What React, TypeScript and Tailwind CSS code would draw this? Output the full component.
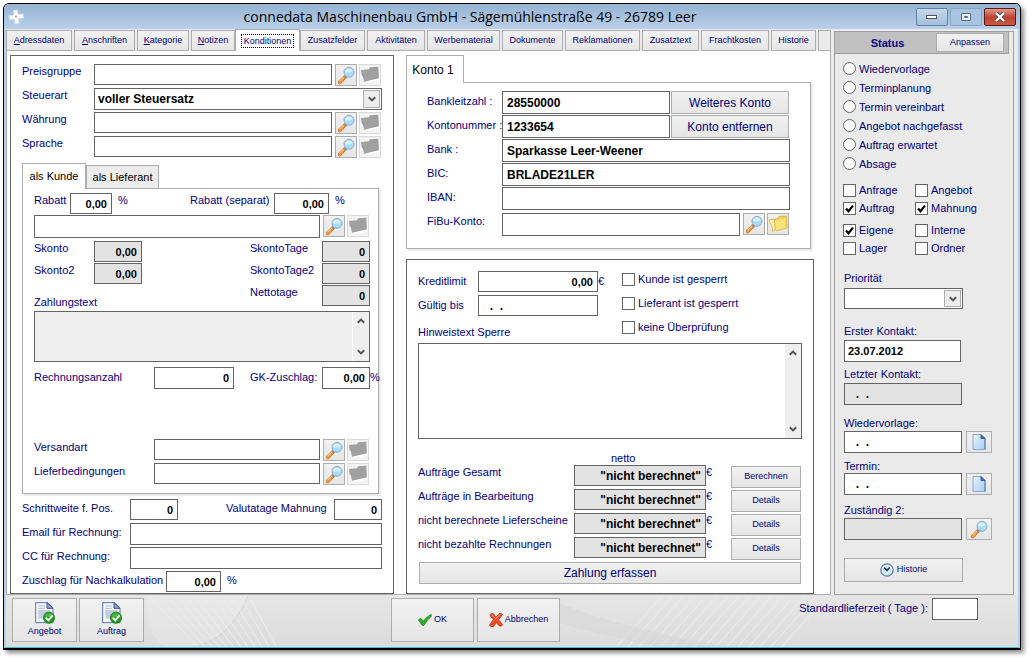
import React from "react";

function cx(...parts: (string | undefined | false)[]) {
  return parts.filter(Boolean).join(" ");
}

/* ---------- icons ---------- */

function SearchIcon() {
  return (
    <svg viewBox="0 0 60 60" className="size-5 shrink-0" aria-hidden="true">
      <path d="M11 52 L27 36" stroke="#c8743a" strokeWidth="11" strokeLinecap="round" />
      <path d="M11 52 L27 36" stroke="#fb9a35" strokeWidth="7" strokeLinecap="round" />
      <path d="M11 48 L25 34" stroke="#ffe0a8" strokeWidth="3" />
      <path d="M25 38 L31 32" stroke="#7d8793" strokeWidth="6" />
      <circle cx="39" cy="22" r="15" fill="#a4dcfa" stroke="#93aec6" strokeWidth="3" />
      <path d="M27 21 a12 12 0 0 1 23 -3 q-10 9 -23 3z" fill="#d9f3ff" />
    </svg>
  );
}

function FolderDisabledIcon() {
  return (
    <svg viewBox="0 0 60 60" className="size-5 shrink-0" aria-hidden="true">
      <path d="M6 14 L26 12 L36 6 L56 5 L59 43 L14 52 L13 35 L9 32z" fill="#ffffff" transform="translate(2 3)" />
      <path d="M3 15 L27 13 L30 7 L55 5 L57 40 L12 50 L9 36 L5 30z" fill="#a0a0a0" />
    </svg>
  );
}

function FolderIcon() {
  return (
    <svg viewBox="0 0 60 60" className="size-5 shrink-0" aria-hidden="true">
      <path d="M22 15 L31 13 L34 7 L55 6 L57 42 L26 50z" fill="#f5cf4e" stroke="#cda42c" strokeWidth="2" />
      <path d="M16 20 L24 18 L52 13 L54 41 L16 51z" fill="#fbe27a" />
      <path d="M4 17 L19 15 L22 48 L14 52 L11 34 L7 31z" fill="#fff0a8" stroke="#d0a02a" strokeWidth="2" />
    </svg>
  );
}

function PageIcon() {
  return (
    <svg viewBox="0 0 14 16" className="h-4 w-3.5" aria-hidden="true">
      <defs>
        <linearGradient id="pageFill" x1="0" y1="0" x2="1" y2="1">
          <stop offset="0" stopColor="#eaf3fd" />
          <stop offset="1" stopColor="#a9cdf2" />
        </linearGradient>
      </defs>
      <path d="M1 .5h8l4 4v11H1z" fill="url(#pageFill)" stroke="#86a8d4" />
      <path d="M9 .5l4 4H9z" fill="#3f6dae" stroke="#355f9f" />
      <path d="M13 4.5v11" stroke="#4a77b8" />
    </svg>
  );
}

function DocumentOkIcon() {
  return (
    <svg viewBox="0 0 60 66" className="h-[22px] w-5" aria-hidden="true">
      <path d="M2 2h36l16 16v44H2z" fill="#f3f6fc" stroke="#5a74a8" strokeWidth="3" />
      <path d="M36 2l18 17H36z" fill="#8fa6d2" stroke="#3c568e" strokeWidth="3" />
      <path d="M10 12h20M10 19h20" stroke="#b6bfd6" strokeWidth="3" />
      <path d="M10 24h36v26H10z" fill="#c6cde0" />
      <circle cx="42" cy="47" r="17" fill="#1f9a1c" stroke="#137012" strokeWidth="2" />
      <path d="M28 42a15 13 0 0 1 28 0q-14 8-28 0z" fill="#6cd060" opacity=".6" />
      <path d="M32 47l8 8 13-15" fill="none" stroke="#fff" strokeWidth="6" />
    </svg>
  );
}

function CheckIcon() {
  return (
    <svg viewBox="0 0 42 36" className="h-3 w-3.5" aria-hidden="true">
      <path d="M1 18q5-6 9-4l6 7Q27 8 39 1q3 3 1 6Q27 18 18 34q-4 2-7-2z" fill="#2fae2c" stroke="#1c7d1c" strokeWidth="2" />
    </svg>
  );
}

function CrossIcon() {
  return (
    <svg viewBox="0 0 42 42" className="size-3.5" aria-hidden="true">
      <path
        d="M8 1q6 0 8 5l5 7L31 1q7-1 9 4L29 20l12 15q-4 6-10 4l-9-10-9 12q-8 1-12-4L13 20 3 8q0-5 5-7z"
        fill="#f04c28"
        stroke="#b32410"
        strokeWidth="2"
      />
      <path d="M8 5l12 13L33 4" fill="none" stroke="#ff9a78" strokeWidth="3" />
    </svg>
  );
}

function ClockIcon() {
  return (
    <svg viewBox="0 0 14 14" className="size-3.5" aria-hidden="true">
      <circle cx="7" cy="7" r="6.2" fill="#d3ebf8" stroke="#5e7f9f" strokeWidth="1.2" />
      <path d="M4.2 4.6L7 7.4l2.6-3" fill="none" stroke="#1c2c3c" strokeWidth="1.5" />
    </svg>
  );
}

function Chevron({ up }: { up?: boolean }) {
  return (
    <svg viewBox="0 0 8 6" className="h-1.5 w-2" aria-hidden="true">
      <path d={up ? "M.8 4.8L4 1.6l3.2 3.2" : "M.8 1.2L4 4.4l3.2-3.2"} fill="none" stroke="#555" strokeWidth="2" />
    </svg>
  );
}

/* ---------- controls ---------- */

type InputProps = React.InputHTMLAttributes<HTMLInputElement> & { grey?: boolean; num?: boolean };

function Input({ grey, num, className, ...rest }: InputProps) {
  return (
    <input
      {...rest}
      type="text"
      readOnly={grey}
      className={cx(
        "min-w-0 rounded-none border border-[#646464] px-1 font-bold text-black outline-none",
        num ? "text-right text-[11px]" : "text-[12px]",
        grey ? "bg-[#e3e3e3]" : "bg-white",
        className
      )}
    />
  );
}

function Label({ htmlFor, className, children }: { htmlFor: string; className?: string; children: React.ReactNode }) {
  return (
    <label htmlFor={htmlFor} className={cx("block shrink-0 leading-[14px] whitespace-nowrap", className)}>
      {children}
    </label>
  );
}

const BTN = "flex shrink-0 items-center justify-center border border-[#adadad] bg-linear-to-b from-[#f1f1f1] to-[#e6e6e6]";

function Lookup({ name, folder }: { name: string; folder?: boolean }) {
  return (
    <div className="mr-px ml-[3px] flex shrink-0 gap-[2px]">
      <button type="button" aria-label={name + " suchen"} className={cx(BTN, "h-[22px] w-[22px]")}>
        <SearchIcon />
      </button>
      {folder ? (
        <button type="button" aria-label={name + " öffnen"} className={cx(BTN, "h-[22px] w-[22px]")}>
          <FolderIcon />
        </button>
      ) : (
        <button
          type="button"
          disabled
          aria-label={name + " öffnen"}
          className="flex h-[22px] w-[22px] items-center justify-center border border-[#dadada] bg-[#f3f3f3]"
        >
          <FolderDisabledIcon />
        </button>
      )}
    </div>
  );
}

function Select({ id, options, className }: { id: string; options: string[]; className?: string }) {
  return (
    <div className={cx("relative", className)}>
      <select
        id={id}
        className="size-full appearance-none rounded-none border border-[#646464] bg-white px-[3px] text-[12px] font-bold text-black outline-none"
      >
        {options.map((o) => (
          <option key={o}>{o}</option>
        ))}
      </select>
      <span className="pointer-events-none absolute inset-y-0.5 right-0.5 flex w-[17px] items-center justify-center border border-[#adadad] bg-[#ececec]">
        <Chevron />
      </span>
    </div>
  );
}

function TextArea({ id, grey, className }: { id: string; grey?: boolean; className?: string }) {
  return (
    <div className={cx("flex border border-[#646464]", grey ? "bg-[#efefef]" : "bg-white", className)}>
      <textarea id={id} className="min-w-0 flex-1 resize-none bg-transparent px-1 text-[12px] font-bold text-black outline-none" />
      <div className="flex w-[17px] flex-col items-center justify-between border-l border-white bg-[#efefef] py-1.5">
        <Chevron up />
        <Chevron />
      </div>
    </div>
  );
}

function Check({ label, checked }: { label: string; checked?: boolean }) {
  return (
    <label className="flex items-center gap-[3px] leading-[14px] whitespace-nowrap">
      <span className="grid size-[13px] shrink-0">
        <input
          type="checkbox"
          defaultChecked={checked}
          className="peer col-start-1 row-start-1 size-[13px] appearance-none border border-[#646464] bg-white"
        />
        <svg
          viewBox="0 0 13 13"
          className="pointer-events-none invisible col-start-1 row-start-1 size-[13px] peer-checked:visible"
          aria-hidden="true"
        >
          <path d="M3 6.5l2.5 2.8L10 3.6" fill="none" stroke="#000" strokeWidth="2.2" />
        </svg>
      </span>
      {label}
    </label>
  );
}

function Radio({ label }: { label: string }) {
  return (
    <label className="flex h-[19px] items-center gap-[3px] leading-[14px] whitespace-nowrap">
      <input
        type="radio"
        name="status"
        className="size-[13px] shrink-0 appearance-none rounded-full border border-[#646464] bg-white checked:border-4"
      />
      {label}
    </label>
  );
}

/* ---------- sections ---------- */

const TABS = [
  { key: "A", rest: "dressdaten", w: "w-[66px]" },
  { key: "A", rest: "nschriften", w: "w-[61px]" },
  { key: "K", rest: "ategorie", w: "w-[52px]" },
  { key: "N", rest: "otizen", w: "w-[44px]" },
  { rest: "Konditionen", w: "w-[65px]", active: true },
  { rest: "Zusatzfelder", w: "w-[65px]" },
  { rest: "Aktivitäten", w: "w-[58px]" },
  { rest: "Werbematerial", w: "w-[73px]" },
  { rest: "Dokumente", w: "w-[61px]" },
  { rest: "Reklamationen", w: "w-[75px]" },
  { rest: "Zusatztext", w: "w-[57px]" },
  { rest: "Frachtkosten", w: "w-[68px]" },
  { rest: "Historie", w: "w-[45px]" },
];

function TabBar() {
  return (
    <div role="tablist" className="flex h-[22px] items-end gap-[2px] text-[9px]">
      {TABS.map((t) =>
        t.active ? (
          <button
            key={t.rest}
            role="tab"
            aria-selected="true"
            type="button"
            className={cx("-mx-[2px] flex h-[22px] shrink-0 items-center justify-center border-x border-t border-[#adadad] bg-white", t.w)}
          >
            <span className="border border-dotted border-black px-[2px] leading-[12px]">{t.rest}</span>
          </button>
        ) : (
          <button
            key={t.rest}
            role="tab"
            aria-selected="false"
            type="button"
            className={cx("flex h-[21px] shrink-0 items-center justify-center border border-[#adadad] bg-linear-to-b from-[#f1f1f1] to-[#e6e6e6]", t.w)}
          >
            {t.key && <u>{t.key}</u>}
            {t.rest}
          </button>
        )
      )}
      <div className="h-[21px] min-w-0 flex-1 border border-[#adadad] bg-[#ececec]" />
    </div>
  );
}

function LookupRow({ id, label }: { id: string; label: string }) {
  return (
    <div className="flex h-6 items-start">
      <Label htmlFor={id} className="w-[72px]">{label}</Label>
      <Input id={id} className="h-[21px] flex-1" />
      <Lookup name={label} />
    </div>
  );
}

function CustomerBox() {
  return (
    <div className="mr-[3px] h-[306px] border border-[#adadad] pt-1 pr-2 pl-[11px] shadow-[2px_2px_0_#ececec]">
      <div className="flex h-[22px] items-start">
        <Label htmlFor="rabatt" className="w-9">Rabatt</Label>
        <Input id="rabatt" num defaultValue="0,00" className="h-[21px] w-[42px]" />
        <span className="ml-1.5 flex-1 leading-[14px]">%</span>
        <Label htmlFor="rabattSep" className="w-[84px]">Rabatt (separat)</Label>
        <Input id="rabattSep" num defaultValue="0,00" className="h-[21px] w-[55px]" />
        <span className="ml-1.5 w-[35px] leading-[14px]">%</span>
      </div>
      <div className="flex h-[26px] items-start">
        <Input aria-label="Rabattgruppe" className="h-[23px] flex-1" />
        <Lookup name="Rabattgruppe" />
      </div>
      <div className="flex h-[22px] items-start">
        <Label htmlFor="skonto" className="w-[60px]">Skonto</Label>
        <Input id="skonto" grey num defaultValue="0,00" className="h-[21px] w-12" />
        <Label htmlFor="skontoTage" className="ml-auto w-[72px]">SkontoTage</Label>
        <Input id="skontoTage" grey num defaultValue="0" className="h-[21px] w-12" />
      </div>
      <div className="flex h-[22px] items-start">
        <Label htmlFor="skonto2" className="w-[60px]">Skonto2</Label>
        <Input id="skonto2" grey num defaultValue="0,00" className="h-[21px] w-12" />
        <Label htmlFor="skontoTage2" className="ml-auto w-[72px]">SkontoTage2</Label>
        <Input id="skontoTage2" grey num defaultValue="0" className="h-[21px] w-12" />
      </div>
      <div className="flex h-[26px] items-start">
        <Label htmlFor="zahlungstext" className="self-end pb-0.5">Zahlungstext</Label>
        <Label htmlFor="nettotage" className="ml-auto w-[72px]">Nettotage</Label>
        <Input id="nettotage" grey num defaultValue="0" className="h-[21px] w-12" />
      </div>
      <TextArea id="zahlungstext" grey className="h-[51px]" />
      <div className="-mr-2 mt-[5px] flex h-[22px] items-start">
        <Label htmlFor="rechnungsanzahl" className="w-[120px] pt-[3px]">Rechnungsanzahl</Label>
        <Input id="rechnungsanzahl" num defaultValue="0" className="h-[22px] w-20" />
        <Label htmlFor="gk" className="ml-auto w-[72px] pt-[3px]">GK-Zuschlag:</Label>
        <Input id="gk" num defaultValue="0,00" className="h-[22px] w-12" />
        <span className="w-2 pt-[3px] leading-[14px]">%</span>
      </div>
      <div className="mt-[50px] flex h-6 items-start">
        <Label htmlFor="versandart" className="w-[120px] pt-px">Versandart</Label>
        <Input id="versandart" className="h-[21px] flex-1" />
        <Lookup name="Versandart" />
      </div>
      <div className="flex h-6 items-start">
        <Label htmlFor="lieferbed" className="w-[120px] pt-px">Lieferbedingungen</Label>
        <Input id="lieferbed" className="h-[21px] flex-1" />
        <Lookup name="Lieferbedingungen" />
      </div>
    </div>
  );
}

function ConditionsPanel() {
  return (
    <section className="w-[384px] shrink-0 border border-[#646464] px-[11px] pt-2">
      <LookupRow id="preisgruppe" label="Preisgruppe" />
      <div className="flex h-6 items-start">
        <Label htmlFor="steuerart" className="w-[72px]">Steuerart</Label>
        <Select id="steuerart" options={["voller Steuersatz"]} className="h-[22px] flex-1" />
      </div>
      <LookupRow id="waehrung" label="Währung" />
      <LookupRow id="sprache" label="Sprache" />

      <div role="tablist" className="mt-[3px] flex items-end text-black">
        <button role="tab" aria-selected="true" type="button" className="relative z-10 -mb-px h-[26px] w-16 border border-b-0 border-[#adadad] bg-white pb-px">
          als Kunde
        </button>
        <button role="tab" aria-selected="false" type="button" className="h-[23px] w-[73px] border border-b-0 border-[#adadad] bg-[#ececec]">
          als Lieferant
        </button>
      </div>
      <CustomerBox />

      <div className="mt-[5px] flex h-6 items-start">
        <Label htmlFor="schrittweite" className="w-[108px] pt-0.5">Schrittweite f. Pos.</Label>
        <Input id="schrittweite" num defaultValue="0" className="h-[21px] w-12" />
        <Label htmlFor="valutatage" className="ml-auto w-[108px] pt-0.5">Valutatage Mahnung</Label>
        <Input id="valutatage" num defaultValue="0" className="h-[21px] w-12" />
      </div>
      <div className="flex h-6 items-start">
        <Label htmlFor="email" className="w-[108px] pt-0.5">Email für Rechnung:</Label>
        <Input id="email" className="h-[22px] flex-1" />
      </div>
      <div className="flex h-6 items-start">
        <Label htmlFor="cc" className="w-[108px] pt-0.5">CC für Rechnung:</Label>
        <Input id="cc" className="h-[22px] flex-1" />
      </div>
      <div className="flex items-start pb-px">
        <Label htmlFor="nachkalk" className="w-36 pt-0.5">Zuschlag für Nachkalkulation</Label>
        <Input id="nachkalk" num defaultValue="0,00" className="h-[21px] w-[55px]" />
        <span className="ml-1.5 pt-0.5 leading-[14px]">%</span>
      </div>
    </section>
  );
}

const BANK_ROWS = [
  { id: "blz", label: "Bankleitzahl :", value: "28550000", button: "Weiteres Konto" },
  { id: "ktonr", label: "Kontonummer :", value: "1233654", button: "Konto entfernen" },
  { id: "bank", label: "Bank :", value: "Sparkasse Leer-Weener" },
  { id: "bic", label: "BIC:", value: "BRLADE21LER" },
  { id: "iban", label: "IBAN:", value: "" },
];

function AccountPanel() {
  return (
    <section className="mr-[3px]">
      <div role="tablist" className="flex text-black">
        <button role="tab" aria-selected="true" type="button" className="relative z-10 -mb-px h-7 w-[58px] border border-b-0 border-[#adadad] bg-white pr-1 text-[12px]">
          Konto 1
        </button>
      </div>
      <div className="border border-[#adadad] pt-2 pr-5 pb-3 pl-5 shadow-[2px_2px_0_#ececec]">
        {BANK_ROWS.map((r) => (
          <div key={r.id} className="flex h-6 items-start">
            <Label htmlFor={r.id} className="w-[75px] pt-[3px]">{r.label}</Label>
            <Input id={r.id} defaultValue={r.value} className="h-[23px] flex-1" />
            {r.button && (
              <button type="button" className={cx(BTN, "mr-px ml-px h-[23px] w-[118px] text-[12px]")}>
                {r.button}
              </button>
            )}
          </div>
        ))}
        <div className="mt-0.5 flex items-start">
          <Label htmlFor="fibu" className="w-[75px] pt-px">FiBu-Konto:</Label>
          <Input id="fibu" className="h-[23px] flex-1" />
          <Lookup name="FiBu-Konto" folder />
        </div>
      </div>
    </section>
  );
}

const SUMS = [
  { id: "gesamt", label: "Aufträge Gesamt", button: "Berechnen" },
  { id: "bearbeitung", label: "Aufträge in Bearbeitung", button: "Details" },
  { id: "lieferscheine", label: "nicht berechnete Lieferscheine", button: "Details" },
  { id: "rechnungen", label: "nicht bezahlte Rechnungen", button: "Details" },
];

function CreditPanel() {
  return (
    <section className="mt-2.5 flex-1 border border-[#646464] px-[11px] pt-[11px]">
      <div className="flex gap-[17px]">
        <div>
          <div className="flex h-6 items-start">
            <Label htmlFor="kredit" className="w-[60px] pt-[3px]">Kreditlimit</Label>
            <Input id="kredit" num defaultValue="0,00" className="h-[21px] w-[120px]" />
            <span className="w-[7px] pt-[3px] leading-[14px]">€</span>
          </div>
          <div className="flex h-6 items-start">
            <Label htmlFor="gueltig" className="w-[60px] pt-[3px]">Gültig bis</Label>
            <Input id="gueltig" defaultValue="  .  ." className="h-[21px] w-[120px]" />
          </div>
          <Label htmlFor="hinweis" className="pt-1.5">Hinweistext Sperre</Label>
        </div>
        <div className="flex flex-col gap-2.5 pt-px">
          <Check label="Kunde ist gesperrt" />
          <Check label="Lieferant ist gesperrt" />
          <Check label="keine Überprüfung" />
        </div>
      </div>
      <TextArea id="hinweis" className="mt-1 h-24" />
      <div className="mt-3 pl-[193px] leading-[14px]">netto</div>
      {SUMS.map((s) => (
        <div key={s.id} className="flex h-6 items-start">
          <Label htmlFor={s.id} className="w-[156px]">{s.label}</Label>
          <Input id={s.id} grey defaultValue={'"nicht berechnet"'} className="h-[21px] w-[132px] text-right" />
          <span className="leading-[14px]">€</span>
          <button type="button" className={cx(BTN, "mt-px mr-px ml-auto h-[22px] w-[70px] text-[9px]")}>
            {s.button}
          </button>
        </div>
      ))}
      <div className="px-px pt-px">
        <button type="button" className={cx(BTN, "h-[22px] w-full text-[12px]")}>
          Zahlung erfassen
        </button>
      </div>
    </section>
  );
}

function Sidebar() {
  return (
    <aside className="mt-0.5 mr-1 ml-[3px] w-[180px] shrink-0 border border-[#9f9f9f] bg-[#eaeaea]">
      <div className="mr-1 flex h-[22px] items-center border-r border-b border-[#9f9f9f] bg-[#c0c0c0]">
        <h2 className="flex-1 pt-0.5 pl-1 text-center text-[11px] font-bold">Status</h2>
        <button type="button" className={cx(BTN, "mr-1 h-[19px] w-[68px] text-[9px]")}>
          Anpassen
        </button>
      </div>
      <div className="pt-[5px] pl-2">
        {["Wiedervorlage", "Terminplanung", "Termin vereinbart", "Angebot nachgefasst", "Auftrag erwartet", "Absage"].map((r) => (
          <Radio key={r} label={r} />
        ))}
        <div className="mt-2.5 grid grid-cols-[72px_1fr] gap-y-1">
          <Check label="Anfrage" />
          <Check label="Angebot" />
          <Check label="Auftrag" checked />
          <Check label="Mahnung" checked />
        </div>
        <div className="mt-2 grid grid-cols-[72px_1fr] gap-y-1">
          <Check label="Eigene" checked />
          <Check label="Interne" />
          <Check label="Lager" />
          <Check label="Ordner" />
        </div>
      </div>
      <div className="pt-4 pr-5 pl-[9px]">
        <Label htmlFor="prio">Priorität</Label>
        <Select id="prio" options={[""]} className="mt-[3px] h-[21px] w-[119px]" />
        <Label htmlFor="erster" className="mt-[15px]">Erster Kontakt:</Label>
        <Input id="erster" defaultValue="23.07.2012" className="mt-0.5 block h-[22px] w-[117px] px-[3px] text-[11px]!" />
        <Label htmlFor="letzter" className="mt-[5px]">Letzter Kontakt:</Label>
        <Input id="letzter" grey defaultValue="  .  ." className="mt-0.5 block h-[22px] w-[118px]" />
        <Label htmlFor="wieder" className="mt-[11px]">Wiedervorlage:</Label>
        <div className="mt-px flex gap-1">
          <Input id="wieder" defaultValue="  .  ." className="h-[22px] w-[118px]" />
          <button type="button" aria-label="Wiedervorlage anlegen" className={cx(BTN, "h-[22px] w-[26px]")}>
            <PageIcon />
          </button>
        </div>
        <Label htmlFor="termin" className="mt-1.5">Termin:</Label>
        <div className="flex gap-1">
          <Input id="termin" defaultValue="  .  ." className="h-[22px] w-[118px]" />
          <button type="button" aria-label="Termin anlegen" className={cx(BTN, "h-[22px] w-[26px]")}>
            <PageIcon />
          </button>
        </div>
        <Label htmlFor="zustaendig" className="mt-2">Zuständig 2:</Label>
        <div className="mt-px flex gap-1">
          <Input id="zustaendig" grey className="h-[22px] w-[118px]" />
          <button type="button" aria-label="Zuständig suchen" className={cx(BTN, "h-[22px] w-[26px]")}>
            <SearchIcon />
          </button>
        </div>
        <button type="button" className={cx(BTN, "mt-[18px] h-6 w-[119px] gap-[3px] text-[9px]")}>
          <ClockIcon />
          Historie
        </button>
      </div>
    </aside>
  );
}

function FooterLines() {
  return (
    <svg className="pointer-events-none absolute inset-0 size-full" aria-hidden="true">
      <path d="M140 1q0 53 30 53 55-3 72-53z" fill="#fff" opacity=".15" />
      <path d="M170 54q50 0 72-53" fill="none" stroke="#d3d3d3" />
      <g stroke="#ececec" strokeWidth="1">
        {Array.from({ length: 12 }, (_, i) => (
          <path key={i} d={`M${145 + i * 9} 3l${50 - i * 2} 52`} />
        ))}
        {Array.from({ length: 16 }, (_, i) => (
          <path key={i} d={`M${656 + i * 11} 1l-48 54`} />
        ))}
      </g>
      <path d="M554 8q60 26 180 46h-70q-70-14-110-26z" fill="#d6d6d6" opacity=".5" />
    </svg>
  );
}

function Footer() {
  return (
    <footer className="relative bg-linear-to-b from-[#e6e6e6] to-[#dcdcdc] text-[9px]">
      <FooterLines />
      <div className="relative grid grid-cols-[379px_1fr_auto] items-start pt-[3px] pr-10 pb-[5px] pl-1.5">
        <div className="flex gap-[2px]">
          {["Angebot", "Auftrag"].map((b) => (
            <button key={b} type="button" className={cx(BTN, "h-11 w-[65px] flex-col gap-px")}>
              <DocumentOkIcon />
              {b}
            </button>
          ))}
        </div>
        <div className="flex gap-[3px]">
          <button type="button" className={cx(BTN, "h-11 w-[83px] gap-0.5")}>
            <CheckIcon />
            OK
          </button>
          <button type="button" className={cx(BTN, "h-11 w-[83px] gap-0.5")}>
            <CrossIcon />
            Abbrechen
          </button>
        </div>
        <div className="flex items-start gap-1 text-[11px]">
          <Label htmlFor="lieferzeit" className="pt-[3px]">Standardlieferzeit ( Tage ):</Label>
          <Input id="lieferzeit" className="h-[22px] w-[46px]" />
        </div>
      </div>
    </footer>
  );
}

function TitleBar() {
  const ctl = "flex h-[18px] w-8 items-center justify-center rounded-[2px] border";
  return (
    <header className="flex h-[25px] items-center bg-linear-to-b from-[#95b3d3] to-[#b9d0ea] pr-1 pl-1">
      <svg viewBox="0 0 16 16" className="size-4" aria-hidden="true">
        <path d="M5.5 1.5l4-.5.5 4.5 5-.5.5 4-5 .5.5 5-4 .5-.5-5-5 .5-.5-4 5-.5z" fill="#fff" stroke="#d5e2f0" />
        <circle cx="8" cy="7.5" r="1" fill="#f08060" />
      </svg>
      <h1 className="flex-1 text-center font-['Open_Sans',sans-serif] text-[14px] leading-[25px] text-black">
        connedata Maschinenbau GmbH - Sägemühlenstraße 49 - 26789 Leer
      </h1>
      <div className="flex gap-[2px]">
        <button type="button" aria-label="Minimieren" className={cx(ctl, "border-[#6580a0] bg-linear-to-b from-[#c5d8ec] to-[#a3bfdd]")}>
          <svg viewBox="0 0 12 6" className="h-1.5 w-3"><rect x=".5" y="1.5" width="10" height="3" fill="#fff" stroke="#555" /></svg>
        </button>
        <button type="button" aria-label="Maximieren" className={cx(ctl, "border-[#8ba5c4] bg-[#a9c4e1]")}>
          <svg viewBox="0 0 10 8" className="h-2 w-2.5"><path d="M.5.5h9v7h-9z" fill="#e8eff7" stroke="#5d6f85" /><path d="M3.5 3.5h3v1h-3z" fill="#a9c4e1" stroke="#5d6f85" /></svg>
        </button>
        <button type="button" aria-label="Schließen" className={cx(ctl, "border-[#5e1a14] bg-linear-to-b from-[#dd9a8c] via-[#bf4330] via-50% to-[#c9583f]")}>
          <svg viewBox="0 0 12 10" className="h-2.5 w-3"><path d="M2 1l8 8M10 1L2 9" stroke="#4a4a58" strokeWidth="4" /><path d="M2 1l8 8M10 1L2 9" stroke="#fff" strokeWidth="2.4" /></svg>
        </button>
      </div>
    </header>
  );
}

export default function App() {
  return (
    <div className="min-h-screen bg-white pt-[3px] pr-2 pb-2 pl-[3px] font-['Liberation_Sans',Arial,sans-serif] text-[11px] text-[#000080]">
      <div className="overflow-hidden rounded-t-md border border-b-2 border-black bg-white shadow-[3px_3px_4px_rgba(0,0,0,0.45)]">
        <TitleBar />
        <div className="border-x-2 border-b border-[#b9d0ea] border-b-[#3fbfe0]">
          <div className="flex bg-[#ebebeb]">
            <main className="flex min-w-0 flex-1 flex-col">
              <TabBar />
              <div className="flex flex-1 gap-3 border-x border-b border-[#adadad] bg-white pt-1 pr-4 pl-[3px]">
                <ConditionsPanel />
                <div className="flex min-w-0 flex-1 flex-col">
                  <AccountPanel />
                  <CreditPanel />
                </div>
              </div>
            </main>
            <Sidebar />
          </div>
          <Footer />
        </div>
      </div>
    </div>
  );
}
